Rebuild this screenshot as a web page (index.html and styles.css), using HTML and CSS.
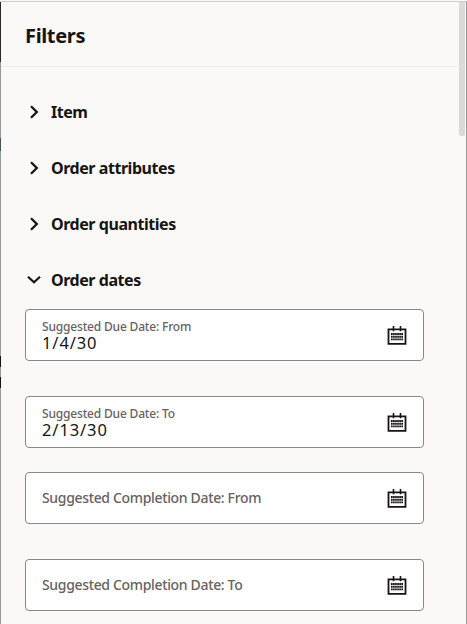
FILE: index.html
```html
<!DOCTYPE html>
<html lang="en">
<head>
    <meta charset="UTF-8">
    <meta name="viewport" content="width=device-width, initial-scale=1.0">
    <title>Filters</title>
    <link rel="stylesheet" href="styles.css">
</head>
<body>
    <svg class="sprite" width="0" height="0">
        <symbol id="chevron-right" viewBox="0 0 16 16">
            <path d="M5 2.2 L10.8 8 L5 13.8" fill="none" stroke="currentColor" stroke-width="2.3"/>
        </symbol>
        <symbol id="chevron-down" viewBox="0 0 16 16">
            <path d="M2 4.8 L8 10.2 L14 4.8" fill="none" stroke="currentColor" stroke-width="2.2"/>
        </symbol>
        <symbol id="calendar" viewBox="0 0 20 20">
            <path d="M1.5 4.3 H18.5 V18.8 H1.5 Z" fill="none" stroke="currentColor" stroke-width="1.8"/>
            <path d="M6.5 1 V6.3 M13.5 1 V6.3" stroke="currentColor" stroke-width="1.6"/>
            <path d="M4 9 H16 M4 11.7 H16 M4 14.4 H16" stroke="currentColor" stroke-width="1.9" stroke-dasharray="1.7 0.36"/>
        </symbol>
    </svg>

    <div class="panel">
        <div class="header">
            <h2>Filters</h2>
        </div>
        <div class="content">
            <button type="button" class="section"><svg class="chevron"><use href="#chevron-right"/></svg><span>Item</span></button>
            <button type="button" class="section"><svg class="chevron"><use href="#chevron-right"/></svg><span>Order attributes</span></button>
            <button type="button" class="section"><svg class="chevron"><use href="#chevron-right"/></svg><span>Order quantities</span></button>
            <button type="button" class="section"><svg class="chevron"><use href="#chevron-down"/></svg><span>Order dates</span></button>

            <div class="fields">
                <div class="field">
                    <div class="text">
                        <div class="label">Suggested Due Date: From</div>
                        <div class="value">1/4/30</div>
                    </div>
                    <svg class="calendar"><use href="#calendar"/></svg>
                </div>
                <div class="field">
                    <div class="text">
                        <div class="label">Suggested Due Date: To</div>
                        <div class="value">2/13/30</div>
                    </div>
                    <svg class="calendar"><use href="#calendar"/></svg>
                </div>
                <div class="field close">
                    <div class="placeholder">Suggested Completion Date: From</div>
                    <svg class="calendar"><use href="#calendar"/></svg>
                </div>
                <div class="field">
                    <div class="placeholder">Suggested Completion Date: To</div>
                    <svg class="calendar"><use href="#calendar"/></svg>
                </div>
            </div>
        </div>
        <div class="scrollbar"></div>
    </div>
</body>
</html>
```

FILE: styles.css
```css
* {
    box-sizing: border-box;
}
body {
    margin: 0;
    padding-top: 1px;
    height: 624px;
    overflow: hidden;
    background-color: #fbf9f8;
    color: #161513;
    font-family: "Noto Sans", "Open Sans", sans-serif;
}
.sprite {
    position: absolute;
}
.panel {
    position: relative;
    height: 623px;
    padding-left: 1px;
    border: 1px solid #999;
    border-top-color: #cccbcf;
    border-left: none;
    border-bottom: none;
    background-color: #fbf9f8;
    /* page behind the drawer, showing along its left edge */
    background-image: linear-gradient(#2b2927 60px, #999 60px, #999 136px, #3c545c 136px, #3c545c 149px, #999 149px, #999 354px, #161513 354px, #161513 365px, #999 365px, #999 375px, #161513 375px, #161513 386px, #999 386px);
    background-size: 1px 100%;
    background-repeat: no-repeat;
}
.header {
    height: 65px;
    margin-right: 8px;
    padding: 20px 0 0 24px;
    border-bottom: 1px solid #efedeb;
}
h2 {
    margin: 0;
    font-size: 20px;
    line-height: 28px;
    font-weight: 700;
    letter-spacing: -0.35px;
}
.content {
    padding: 17px 42px 0 24px;
}
.section {
    display: flex;
    align-items: center;
    width: 100%;
    height: 56px;
    padding: 0;
    border: none;
    background: none;
    color: inherit;
    font: 700 16px "Noto Sans", "Open Sans", sans-serif;
    letter-spacing: -0.45px;
}
.chevron {
    width: 16px;
    height: 16px;
    margin: 0 9px 0 1px;
}
.field {
    display: flex;
    align-items: center;
    justify-content: space-between;
    height: 52px;
    margin-top: 35px;
    padding: 0 16px;
    border: 1px solid #8b8886;
    border-radius: 4px;
    background-color: #fff;
}
.field:first-child {
    margin-top: 1px;
}
.field.close {
    margin-top: 24px;
}
.label {
    color: #65625f;
    font-size: 12px;
    font-weight: 500;
    line-height: 16px;
    letter-spacing: -0.18px;
}
.value {
    font-size: 16.5px;
    line-height: 16px;
    letter-spacing: 0.9px;
}
.placeholder {
    margin-top: -2px;
    color: #65625f;
    font-size: 14px;
    font-weight: 500;
    letter-spacing: -0.34px;
}
.calendar {
    width: 20px;
    height: 20px;
}
.scrollbar {
    position: absolute;
    top: 0;
    right: 1px;
    width: 6px;
    height: 134px;
    border-radius: 0 0 2px 2px;
    background-color: #dcdad9;
}
```
